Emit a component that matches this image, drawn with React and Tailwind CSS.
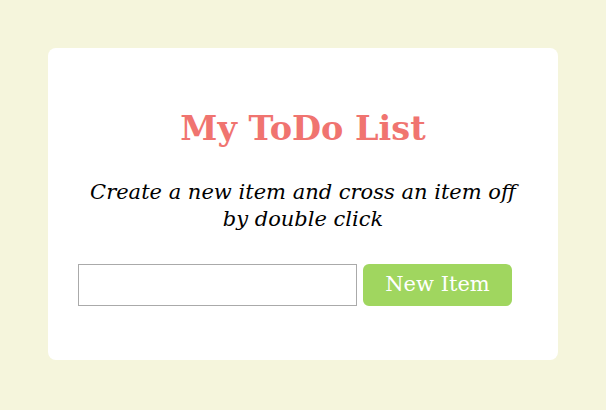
import { useState } from 'react';

export default function App() {
  const [text, setText] = useState('');

  return (
    <div className="min-h-[410px] bg-[#f5f5dc] pt-12 font-['DejaVu_Serif',serif]">
      <div className="mx-auto w-[510px] h-[312px] rounded-lg bg-white px-[30px] pt-[61px]">
        <h1 className="text-center text-[33.5px] leading-[40px] font-bold text-[#f07470]">
          My ToDo List
        </h1>
        <p className="mt-[30px] text-center text-[21px] leading-[27px] italic text-black">
          Create a new item and cross an item off
          <br />
          by double click
        </p>
        <div className="mt-[31px] flex items-center gap-[6px]">
          <input
            type="text"
            value={text}
            onChange={(e) => setText(e.target.value)}
            className="h-[42px] w-[279px] border border-[#aaaaaa] bg-white px-2 text-lg outline-none"
          />
          <button className="h-[42px] w-[149px] rounded-md bg-[#a0d65f] text-[21px] text-white">
            New Item
          </button>
        </div>
      </div>
    </div>
  );
}
